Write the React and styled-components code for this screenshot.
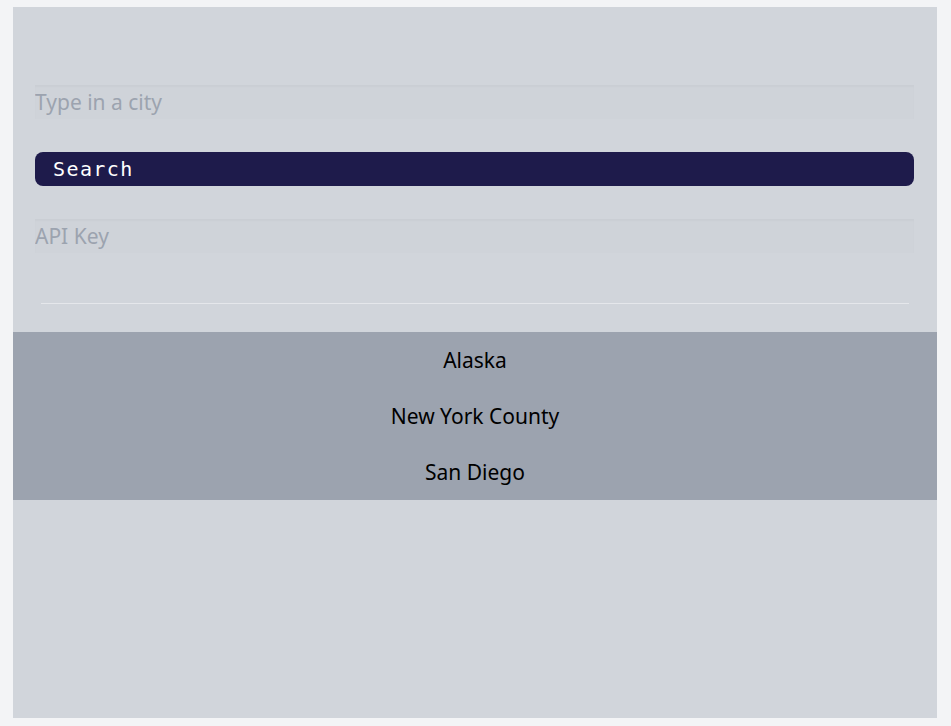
import React from "react";
import styled, { createGlobalStyle } from "styled-components";

const GlobalStyle = createGlobalStyle`
  html, body {
    margin: 0;
    padding: 0;
    background: #f3f4f6;
    font-family: "Noto Sans", "Open Sans", sans-serif;
  }
`;

const StyledPage = styled.div`
  padding: 7px 14px 8px 13px;
  height: 726px;
  box-sizing: border-box;
`;
const StyledCard = styled.main`
  background: #d1d5db;
  height: 100%;
  display: flex;
  flex-direction: column;
`;
const StyledForm = styled.form`
  display: flex;
  flex-direction: column;
  gap: 33px;
  padding: 78px 23px 0 22px;
`;
const StyledInput = styled.input`
  height: 34px;
  box-sizing: border-box;
  border: none;
  outline: none;
  padding: 0;
  background: rgba(0, 0, 0, 0.008);
  box-shadow: inset 0 2px 2px rgba(0, 0, 0, 0.025);
  font-family: "Noto Sans", "Open Sans", sans-serif;
  font-size: 21px;
  color: #111827;

  &::placeholder {
    color: #9ca3af;
  }
`;
const StyledButton = styled.button`
  height: 34px;
  border: none;
  border-radius: 8px;
  background: #1e1b4b;
  color: #ffffff;
  text-align: left;
  padding: 0 18px;
  font-family: "DejaVu Sans Mono", "Liberation Mono", monospace;
  font-size: 20px;
  letter-spacing: 1.4px;
`;
const StyledDivider = styled.hr`
  margin: 50px 28px 28px;
  border: none;
  height: 1px;
  background: #e5e7eb;
`;
const StyledList = styled.ul`
  list-style: none;
  margin: 0;
  padding: 0;
  background: #9ca3af;
`;
const StyledItem = styled.li`
  height: 56px;
  display: flex;
  align-items: center;
  justify-content: center;
  font-size: 21px;
  color: #000000;
`;

const cities = ["Alaska", "New York County", "San Diego"];

const App = () => {
  return (
    <>
      <GlobalStyle />
      <StyledPage>
        <StyledCard>
          <StyledForm onSubmit={(e) => e.preventDefault()}>
            <StyledInput placeholder="Type in a city" />
            <StyledButton type="submit">Search</StyledButton>
            <StyledInput placeholder="API Key" />
          </StyledForm>
          <StyledDivider />
          <StyledList>
            {cities.map((city) => (
              <StyledItem key={city}>{city}</StyledItem>
            ))}
          </StyledList>
        </StyledCard>
      </StyledPage>
    </>
  );
};

export default App;
